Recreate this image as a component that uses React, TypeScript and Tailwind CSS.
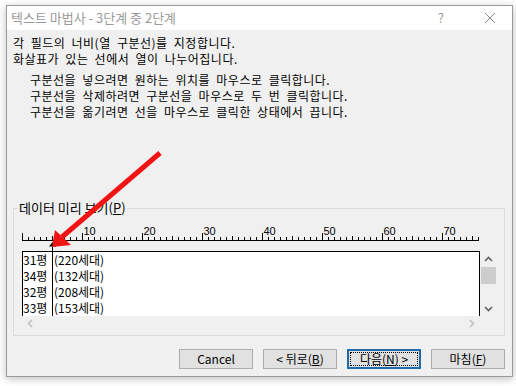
import React from 'react'

const rows = [
  ['31평', '(220세대)'],
  ['34평', '(132세대)'],
  ['32평', '(208세대)'],
  ['33평', '(153세대)'],
]

function Ruler() {
  const ticks = []
  for (let i = 0; i <= 76; i++) {
    const x = i * 6 + 0.5
    const top = i % 10 === 0 ? 11 : i % 5 === 0 ? 14 : 15
    ticks.push(<line key={i} x1={x} y1={top} x2={x} y2={18} stroke="#000" strokeWidth={1} />)
  }
  const labels = [10, 20, 30, 40, 50, 60, 70]
  return (
    <svg width={460} height={29} className="block">
      <line x1={0} y1={18.5} x2={457} y2={18.5} stroke="#000" strokeWidth={1} />
      {ticks}
      {labels.map(n => (
        <text key={n} x={n * 6 + 1.5} y={13} fontSize={11} fontFamily="Liberation Sans, sans-serif" fill="#000">
          {n}
        </text>
      ))}
      <polygon points="30.5,20 27,24.5 34,24.5" fill="#000" />
      <line x1={30.5} y1={24} x2={30.5} y2={29} stroke="#000" strokeWidth={1} />
    </svg>
  )
}

function Chevron({ dir, color }: { dir: 'up' | 'down' | 'left' | 'right'; color: string }) {
  const pts = {
    up: '1,6 4.5,2.5 8,6',
    down: '1,3 4.5,6.5 8,3',
    left: '6,1 2.5,4.5 6,8',
    right: '3,1 6.5,4.5 3,8',
  }[dir]
  return (
    <svg width={9} height={9} className="block">
      <polyline points={pts} fill="none" stroke={color} strokeWidth={1.6} />
    </svg>
  )
}

function Button({ children, primary }: { children: React.ReactNode; primary?: boolean }) {
  return (
    <button
      className={
        'w-[74px] h-[20px] bg-[#e1e1e1] text-[12px] text-black flex items-center justify-center ' +
        (primary ? 'border-2 border-[#1f6aa8] p-[1px]' : 'border border-[#adadad]')
      }
    >
      {primary ? (
        <span className="w-full h-full border border-dotted border-black flex items-center justify-center">{children}</span>
      ) : (
        children
      )}
    </button>
  )
}

export default function App() {
  return (
    <div className="w-[516px] h-[386px] bg-white pt-[5px] pl-[6px] relative overflow-hidden font-['Noto_Sans_CJK_KR',sans-serif]">
      <div className="w-[507px] h-[372px] border border-[#9a9a9a] bg-[#f0f0f0] flex flex-col shadow-[0_2px_8px_rgba(0,0,0,0.25)]">
        <div className="h-[24px] bg-white flex items-center pl-[4px] text-[13px] text-[#9a9a9a]">
          <span>텍스트 마법사 - 3단계 중 2단계</span>
          <span className="ml-auto mr-[40px] text-[13px]">?</span>
          <svg width={12} height={12} className="mr-[16px]">
            <path d="M1 1 L11 11 M11 1 L1 11" stroke="#8a8a8a" strokeWidth={1} />
          </svg>
        </div>

        <div className="flex flex-col px-[6px] pt-[5px] text-[12px] leading-[16px] text-black">
          <div className="tracking-[0.5px] [word-spacing:3px]">
            <p>각 필드의 너비(열 구분선)를 지정합니다.</p>
            <p>화살표가 있는 선에서 열이 나누어집니다.</p>
            <div className="mt-[5px] pl-[17px]">
              <p>구분선을 넣으려면 원하는 위치를 마우스로 클릭합니다.</p>
              <p>구분선을 삭제하려면 구분선을 마우스로 두 번 클릭합니다.</p>
              <p>구분선을 옮기려면 선을 마우스로 클릭한 상태에서 끕니다.</p>
            </div>
          </div>

          <fieldset className="mt-[80px] w-[492px] border border-[#dcdcdc] pb-[4px]">
            <legend className="ml-[4px] px-[1px] leading-[16px] text-[13px]">
              데이터 미리 보기(<span className="underline">P</span>)
            </legend>
            <div className="pl-[8px] text-[12px]">
              <div className="mt-[6px]">
                <Ruler />
              </div>
              <div className="flex">
                <div className="w-[458px] h-[65px] bg-white border-l border-t border-r border-black flex overflow-hidden leading-[16px]">
                  <div className="w-[29px] shrink-0">
                    {rows.map(r => (
                      <div key={r[0]}>{r[0]}</div>
                    ))}
                  </div>
                  <div className="border-l border-black pl-[1px]">
                    {rows.map(r => (
                      <div key={r[1]}>{r[1]}</div>
                    ))}
                  </div>
                </div>
                <div className="w-[17px] h-[65px] flex flex-col items-center">
                  <div className="h-[16px] flex items-center justify-center">
                    <Chevron dir="up" color="#606060" />
                  </div>
                  <div className="w-[15px] h-[17px] bg-[#cdcdcd]" />
                  <div className="mt-auto h-[15px] flex items-center justify-center">
                    <Chevron dir="down" color="#606060" />
                  </div>
                </div>
              </div>
              <div className="w-[458px] h-[15px] flex items-center justify-between px-[4px]">
                <Chevron dir="left" color="#c0c0c0" />
                <Chevron dir="right" color="#c0c0c0" />
              </div>
            </div>
          </fieldset>

          <div className="mt-[13px] flex justify-end gap-[10px] w-[492px]">
            <Button>Cancel</Button>
            <Button>
              &lt; 뒤로(<span className="underline">B</span>)
            </Button>
            <Button primary>
              다음(<span className="underline">N</span>) &gt;
            </Button>
            <Button>
              마침(<span className="underline">F</span>)
            </Button>
          </div>
        </div>
      </div>

      <svg width={516} height={386} className="absolute left-0 top-0 pointer-events-none">
        <line x1={160} y1={153} x2={62} y2={237} stroke="#f01414" strokeWidth={5} />
        <polygon points="52,247 55,230 71,245" fill="#f01414" />
      </svg>
    </div>
  )
}
